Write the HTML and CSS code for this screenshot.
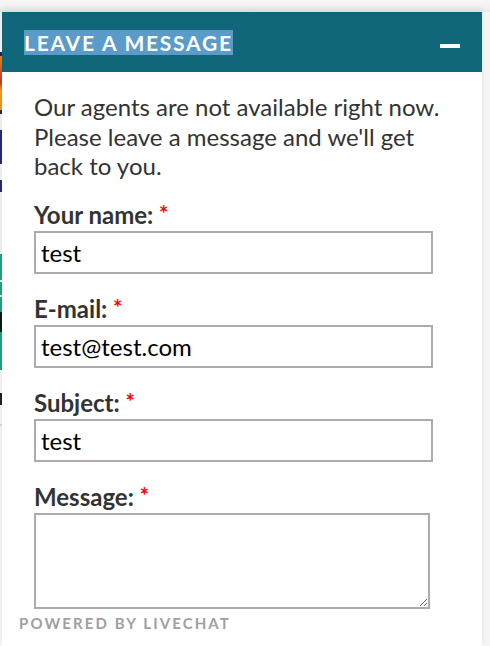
FILE: index.html
```html
<!DOCTYPE html>
<html>
<head>
<meta charset="utf-8">
<link rel="stylesheet" href="styles.css">
</head>
<body>
<div class="page">
  <div class="edge"></div>
  <div class="panel">
    <div class="header">
      <h1 class="title"><span class="sel">LEAVE A MESSAGE</span></h1>
      <span class="minimize"></span>
    </div>
    <div class="content">
      <p class="intro">Our agents are not available right now. Please leave a message and we'll get back to you.</p>
      <div class="field">
        <label class="label">Your name: <span class="req">*</span></label>
        <input class="input" type="text" value="test">
      </div>
      <div class="field">
        <label class="label">E-mail: <span class="req">*</span></label>
        <input class="input" type="text" value="test@test.com">
      </div>
      <div class="field">
        <label class="label">Subject: <span class="req">*</span></label>
        <input class="input" type="text" value="test">
      </div>
      <div class="field">
        <label class="label">Message: <span class="req">*</span></label>
        <textarea class="textarea"></textarea>
      </div>
    </div>
    <div class="footer">POWERED BY LIVECHAT</div>
  </div>
</div>
</body>
</html>
```
FILE: styles.css
```css
html, body {
  margin: 0;
  padding: 0;
  background: #f5f5f5;
}
.page {
  display: flex;
  height: 646px;
  padding-top: 12px;
  box-sizing: border-box;
  overflow: hidden;
  background: linear-gradient(#f7f7f7, #f0f0f0 8px, #e9e9e9 12px, #f5f5f5 12px);
}
.edge {
  width: 2px;
  flex: none;
  background: linear-gradient(#f5f5f5 0, #f5f5f5 40px, #1d2a6b 40px, #1d2a6b 44px, #e98a1a 44px, #c0392b 70px, #f29a1a 78px, #f29a1a 98px, #1d2a6b 98px, #1d2a6b 102px, #f3f3f3 102px, #f3f3f3 118px, #232a78 118px, #232a78 152px, #f3f3f3 152px, #f3f3f3 168px, #232a78 168px, #232a78 180px, #f3f3f3 180px, #f3f3f3 242px, #1fa382 242px, #1fa382 268px, #f3f3f3 268px, #f3f3f3 270px, #1fa382 270px, #1fa382 283px, #f3f3f3 283px, #f3f3f3 285px, #1fa382 285px, #1fa382 300px, #0a1a14 300px, #0a1a14 320px, #1fa382 320px, #1fa382 358px, #f5f5f5 358px, #f5f5f5 381px, #222 381px, #222 393px, #f5f5f5 393px, #f5f5f5 412px, #ddd 412px, #ddd 414px, #f5f5f5 414px);
}
.panel {
  width: 480px;
  flex: none;
  background: #fff;
  box-shadow: 0 -3px 6px rgba(0, 0, 0, 0.08);
  font-family: Lato, "Noto Sans", sans-serif;
  display: flex;
  flex-direction: column;
}
.header {
  height: 60px;
  background: #10677a;
  display: flex;
  align-items: center;
  justify-content: space-between;
  padding: 0 22px;
}
.title {
  margin: 0;
  font-size: 21px;
  font-weight: 700;
  letter-spacing: 1.75px;
  color: #fff;
  line-height: 23px;
}
.sel {
  background: #5a9bc9;
}
.minimize {
  width: 20px;
  height: 4px;
  background: #fff;
  margin-top: 8px;
}
.content {
  padding: 20px 36px 0 32px;
}
.intro {
  margin: 0 0 20px;
  font-size: 24px;
  line-height: 29.5px;
  color: #333;
}
.field {
  margin-bottom: 21px;
}
.label {
  display: block;
  font-size: 24px;
  font-weight: 700;
  line-height: 26px;
  color: #333;
  margin-bottom: 3px;
}
.req {
  color: #f00;
  font-size: 22px;
  vertical-align: 2px;
}
.input {
  display: block;
  box-sizing: border-box;
  width: 399px;
  height: 43px;
  margin: 0;
  border: 2px solid #acacb0;
  border-radius: 0;
  padding: 0 5px;
  font-family: Lato, "Noto Sans", sans-serif;
  font-size: 24px;
  color: #000;
  background: #fff;
  outline: none;
}
.textarea {
  display: block;
  box-sizing: border-box;
  width: 396px;
  height: 96px;
  margin: 0;
  border: 2px solid #acacb0;
  border-radius: 0;
  padding: 5px;
  font-family: Lato, "Noto Sans", sans-serif;
  font-size: 24px;
  resize: both;
  background: #fff;
}
.footer {
  margin-top: -16px;
  padding-left: 17px;
  font-size: 15px;
  font-weight: 700;
  letter-spacing: 2.1px;
  color: #a0a0a0;
  line-height: 18px;
}
```
